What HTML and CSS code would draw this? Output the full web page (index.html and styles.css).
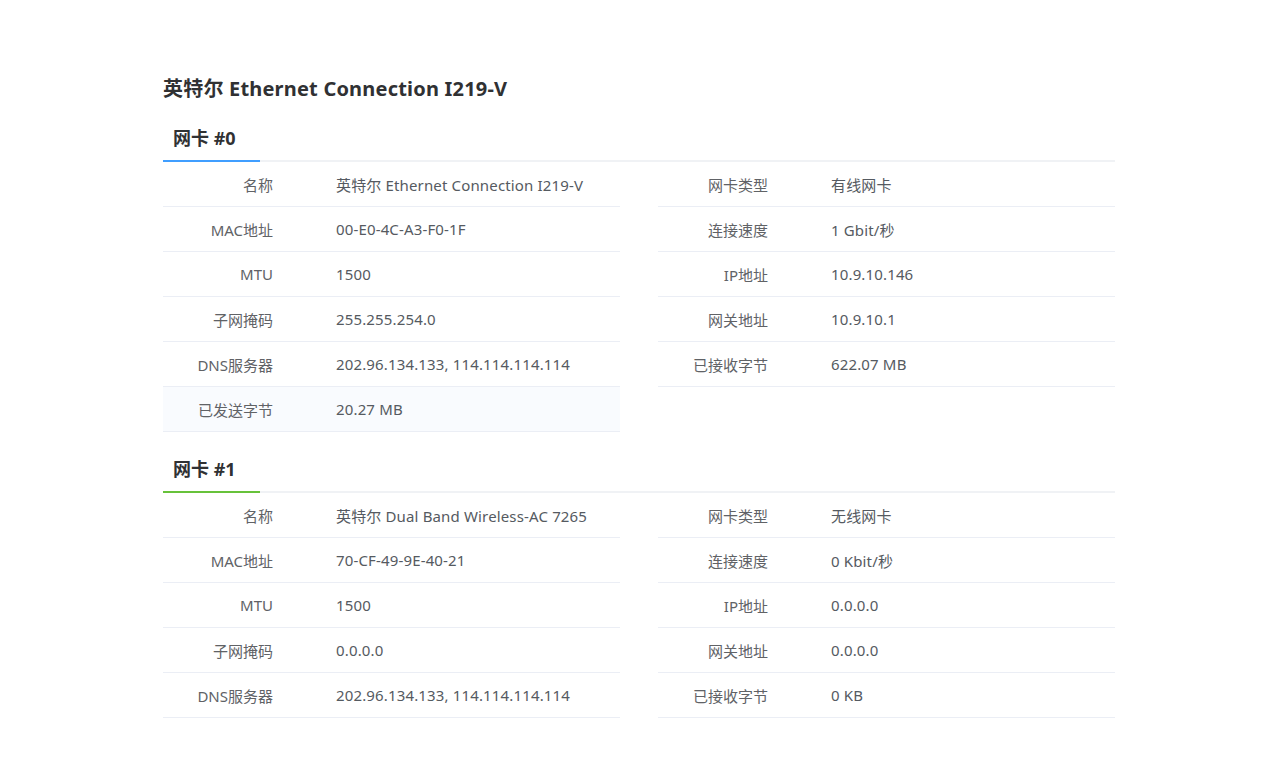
FILE: index.html
```html
<!DOCTYPE html>
<html lang="zh-CN">
<head>
<meta charset="utf-8">
<title>网卡信息</title>
<link rel="stylesheet" href="styles.css">
</head>
<body>
<div class="page">
  <h1 class="title">英特尔 Ethernet Connection I219-V</h1>

  <section class="card">
    <div class="tabs">
      <div class="tab tab-blue">网卡 #0</div>
    </div>
    <div class="cols">
      <div class="col">
        <div class="row"><div class="k">名称</div><div class="v">英特尔 Ethernet Connection I219-V</div></div>
        <div class="row"><div class="k">MAC地址</div><div class="v">00-E0-4C-A3-F0-1F</div></div>
        <div class="row"><div class="k">MTU</div><div class="v">1500</div></div>
        <div class="row"><div class="k">子网掩码</div><div class="v">255.255.254.0</div></div>
        <div class="row"><div class="k">DNS服务器</div><div class="v">202.96.134.133, 114.114.114.114</div></div>
        <div class="row row-hover"><div class="k">已发送字节</div><div class="v">20.27 MB</div></div>
      </div>
      <div class="col">
        <div class="row"><div class="k">网卡类型</div><div class="v">有线网卡</div></div>
        <div class="row"><div class="k">连接速度</div><div class="v">1 Gbit/秒</div></div>
        <div class="row"><div class="k">IP地址</div><div class="v">10.9.10.146</div></div>
        <div class="row"><div class="k">网关地址</div><div class="v">10.9.10.1</div></div>
        <div class="row"><div class="k">已接收字节</div><div class="v">622.07 MB</div></div>
      </div>
    </div>
  </section>

  <section class="card card-2">
    <div class="tabs">
      <div class="tab tab-green">网卡 #1</div>
    </div>
    <div class="cols">
      <div class="col">
        <div class="row"><div class="k">名称</div><div class="v">英特尔 Dual Band Wireless-AC 7265</div></div>
        <div class="row"><div class="k">MAC地址</div><div class="v">70-CF-49-9E-40-21</div></div>
        <div class="row"><div class="k">MTU</div><div class="v">1500</div></div>
        <div class="row"><div class="k">子网掩码</div><div class="v">0.0.0.0</div></div>
        <div class="row"><div class="k">DNS服务器</div><div class="v">202.96.134.133, 114.114.114.114</div></div>
      </div>
      <div class="col">
        <div class="row"><div class="k">网卡类型</div><div class="v">无线网卡</div></div>
        <div class="row"><div class="k">连接速度</div><div class="v">0 Kbit/秒</div></div>
        <div class="row"><div class="k">IP地址</div><div class="v">0.0.0.0</div></div>
        <div class="row"><div class="k">网关地址</div><div class="v">0.0.0.0</div></div>
        <div class="row"><div class="k">已接收字节</div><div class="v">0 KB</div></div>
      </div>
    </div>
  </section>
</div>
</body>
</html>
```

FILE: styles.css
```css
html, body {
  margin: 0;
  padding: 0;
  background: #ffffff;
}

body {
  font-family: "Noto Sans", "Noto Sans CJK SC", sans-serif;
  color: #606266;
  font-size: 15px;
}

.page {
  width: 952px;
  margin-left: 163px;
  padding-top: 75px;
}

.title {
  margin: 0;
  font-size: 20px;
  line-height: 28px;
  font-weight: 700;
  color: #303133;
  letter-spacing: 0.2px;
}

.card {
  margin-top: 16px;
}

.card-2 {
  margin-top: 18px;
}

.tabs {
  height: 41px;
  border-bottom: 2px solid #f0f2f5;
  display: flex;
}

.tab {
  width: 97px;
  box-sizing: border-box;
  padding-left: 10px;
  line-height: 38px;
  padding-bottom: 3px;
  font-size: 18px;
  font-weight: 700;
  color: #303133;
  margin-bottom: -2px;
}

.tab-blue {
  border-bottom: 2px solid #409eff;
}

.tab-green {
  border-bottom: 2px solid #67c23a;
}

.cols {
  display: flex;
  gap: 38px;
}

.col {
  flex: 1;
  display: flex;
  flex-direction: column;
}

.row {
  display: flex;
  height: 44px;
  align-items: center;
  border-bottom: 1px solid #ebeef5;
}

.row-hover {
  background: #f9fbfe;
}

.k {
  width: 110px;
  text-align: right;
  color: #606266;
  flex: none;
}

.v {
  margin-left: 63px;
  color: #555a61;
  letter-spacing: 0.15px;
}
```
